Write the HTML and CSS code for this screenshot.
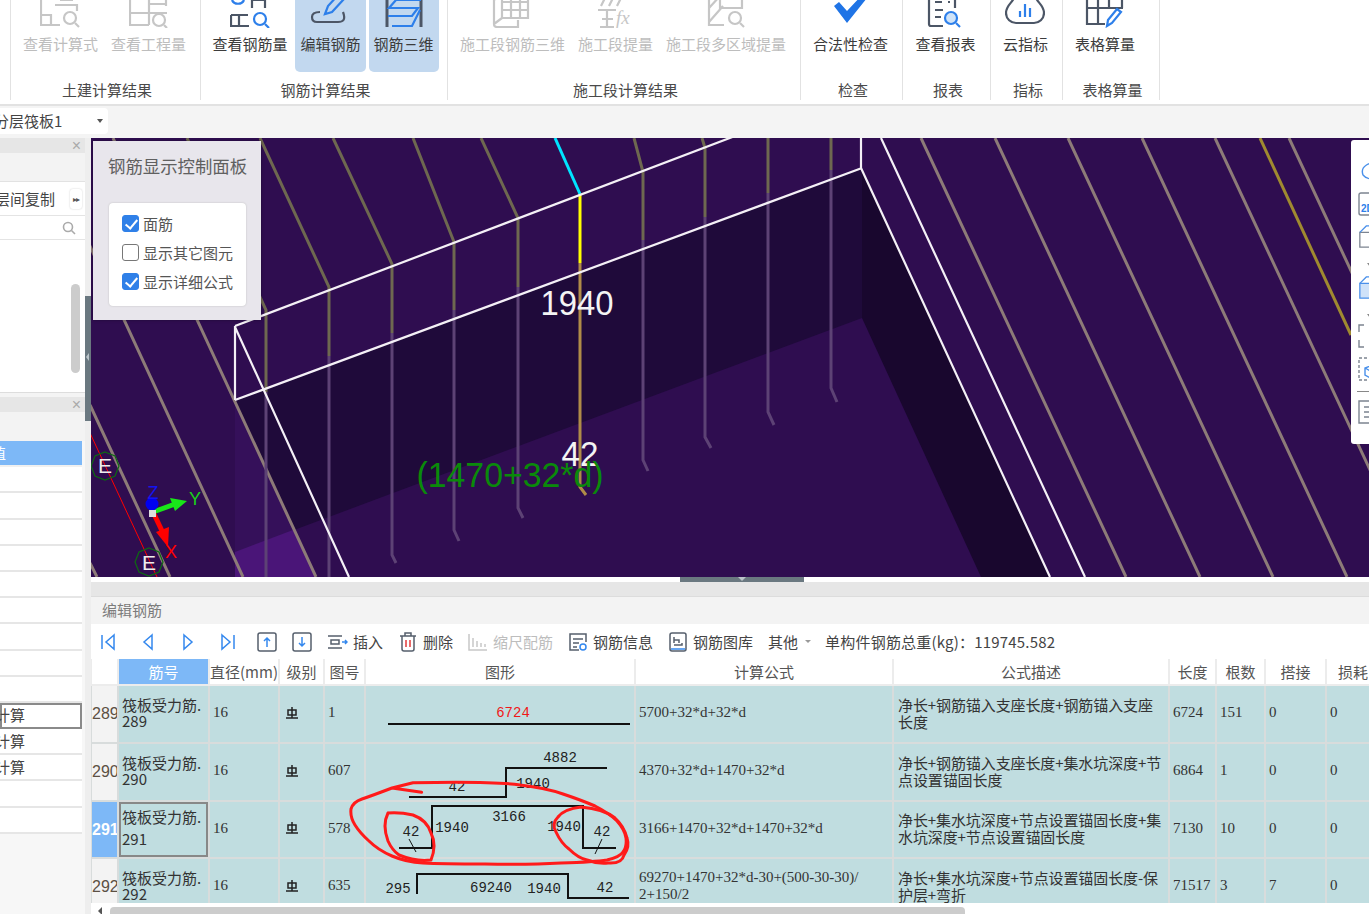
FILE: index.html
```html
<!DOCTYPE html>
<html lang="zh-CN">
<head>
<meta charset="utf-8">
<title>编辑钢筋</title>
<link rel="stylesheet" href="styles.css">
</head>
<body>

<!-- ribbon -->
<header class="ribbon">
  <div class="group g-edge"></div>

  <section class="group g-civil">
    <div class="btns">
      <div class="rbtn off">
        <svg class="ricon" viewBox="0 0 40 34"><path class="i-off" d="M1 0V31H20M1 21H11V31M15 11H37V17M20 6H33"/><circle class="i-off" cx="30" cy="24" r="6"/><path class="i-off" d="M35 29l4 4"/></svg>
        <span>查看计算式</span>
      </div>
      <div class="rbtn off">
        <svg class="ricon" viewBox="0 0 40 34"><path class="i-off" d="M1 0V31H20M1 19H38M20 0V31M37 0V12M20 10H37"/><circle class="i-off" cx="30" cy="26" r="6"/><path class="i-off" d="M35 31l3 3"/></svg>
        <span>查看工程量</span>
      </div>
    </div>
    <h3>土建计算结果</h3>
  </section>

  <section class="group g-rebar">
    <div class="btns">
      <div class="rbtn">
        <svg class="ricon" viewBox="0 0 40 34"><path class="i-blue" d="M2 6c2 5 10 5 12 0"/><path class="i-dark" d="M22 0V14M35 0V14M22 6H35M1 21H18M1 21V32H19M9 21V32"/><circle class="i-blue" cx="30" cy="25" r="6"/><path class="i-blue" d="M35 30l4 4"/></svg>
        <span>查看钢筋量</span>
      </div>
      <div class="rbtn on">
        <svg class="ricon" viewBox="0 0 40 34"><path class="i-dark" d="M33 18c3 8 0 10-5 10H7c-4 0-5-2-5-5 0-3 3-5 8-5"/><path class="i-blue" d="M15 20l3-8L29 0l5 5L22 18z"/></svg>
        <span>编辑钢筋</span>
      </div>
      <div class="rbtn on">
        <svg class="ricon" viewBox="0 0 40 34"><path class="i-dark thick" d="M3 0V33M37 0V33"/><path class="i-blue" d="M37 6H12L5 14H34L28 22H4M36 16L28 32H8"/></svg>
        <span>钢筋三维</span>
      </div>
    </div>
    <h3>钢筋计算结果</h3>
  </section>

  <section class="group g-stage">
    <div class="btns">
      <div class="rbtn off">
        <svg class="ricon" viewBox="0 0 40 34"><path class="i-off" d="M2 6V30Q2 33 5 33H26V26M2 30l8-6M10 0V24H36V4M10 8H36M10 16H36M19 0V24M28 0V24M2 6l8-6"/></svg>
        <span>施工段钢筋三维</span>
      </div>
      <div class="rbtn off">
        <svg class="ricon" viewBox="0 0 40 34"><path class="i-off" d="M3 16H21M12 16V33M5 33H19M7 25H18M6 12L11 2M14 12L20 0M22 12L28 0"/><text class="i-fx" x="21" y="30">fx</text></svg>
        <span>施工段提量</span>
      </div>
      <div class="rbtn off">
        <svg class="ricon" viewBox="0 0 40 34"><path class="i-off" d="M3 0V31H18M3 14L14 2M3 28L17 12M14 0V14H36V4"/><circle class="i-off" cx="29" cy="24" r="6"/><path class="i-off" d="M34 29l4 4"/></svg>
        <span>施工段多区域提量</span>
      </div>
    </div>
    <h3>施工段计算结果</h3>
  </section>

  <section class="group g-check">
    <div class="btns">
      <div class="rbtn">
        <svg class="ricon" viewBox="0 0 40 34"><path class="i-fill" d="M4 12l5-4 8 9L33 0l4 4-20 25z"/></svg>
        <span>合法性检查</span>
      </div>
    </div>
    <h3>检查</h3>
  </section>

  <section class="group g-report">
    <div class="btns">
      <div class="rbtn">
        <svg class="ricon" viewBox="0 0 40 34"><path class="i-dark" d="M4 0V30c0 2 1 2 2 2H18M30 0V14M10 8H17M23 8H25M10 16H18M10 23H16"/><circle class="i-blue light" cx="26" cy="24" r="6"/><path class="i-blue" d="M31 29l4 4"/></svg>
        <span>查看报表</span>
      </div>
    </div>
    <h3>报表</h3>
  </section>

  <section class="group g-cloud">
    <div class="btns">
      <div class="rbtn">
        <svg class="ricon" viewBox="0 0 40 34"><path class="i-dark" d="M10 0C10 8 1 10 1 19c0 6 5 10 10 10H29c5 0 10-4 10-10 0-9-9-11-9-19"/><path class="i-blue" d="M15 17V23M20 10V23M25 14V23"/></svg>
        <span>云指标</span>
      </div>
    </div>
    <h3>指标</h3>
  </section>

  <section class="group g-table">
    <div class="btns">
      <div class="rbtn">
        <svg class="ricon" viewBox="0 0 40 34"><path class="i-dark" d="M2 0V30H20M2 14H38M13 0V30M24 0V14M37 0V14M2 4H37"/><path class="i-blue" d="M22 32l1-6 9-11 4 3-9 11z"/></svg>
        <span>表格算量</span>
      </div>
    </div>
    <h3>表格算量</h3>
  </section>
</header>

<div class="floorbar">
  <div class="combo"><span class="combo-text">分层筏板1</span><i class="caret"></i></div>
</div>

<div class="workspace">
  <!-- left column, cut off by the window edge -->
  <aside class="side">
    <div class="side-panel top">
      <div class="side-head"><span class="close">×</span></div>
      <div class="side-blank"></div>
      <div class="side-tool"><span class="cut">层间复制</span><span class="more">▸▸</span></div>
      <div class="side-search">
        <svg class="search" viewBox="0 0 14 14"><circle cx="6" cy="6" r="4.5"/><path d="M9.5 9.5L13 13"/></svg>
      </div>
      <div class="side-tree"><div class="thumb"></div></div>
    </div>
    <div class="side-panel low">
      <div class="side-head"><span class="close">×</span></div>
      <div class="side-blank short"></div>
      <ul class="side-list">
        <li class="sel"><span class="cut-more">值</span></li>
        <li></li><li></li><li></li><li></li><li></li><li></li><li></li><li></li><li></li>
        <li class="cur"><span class="cut-less">计算</span></li>
        <li><span class="cut-less">计算</span></li>
        <li><span class="cut-less">计算</span></li>
        <li></li><li></li>
      </ul>
    </div>
  </aside>

  <div class="splitter"><div class="grip"><i></i></div></div>

  <main class="content">
    <div class="view">
      <svg class="scene" viewBox="91 138 1278 439">
        <rect class="s-bg" x="91" y="138" width="1278" height="439"/>
        <polygon class="s-wall" points="235,400 862,168 862,318 235,552"/>
        <polygon class="s-side" points="862,168 1050,577 981,577 862,318"/>
        <polygon class="s-left" points="235,400 316,577 235,577"/>
        <polygon class="s-glow" points="235,552 293,530 316,577 235,577"/>

        <!-- long bars on the right -->
        <path class="s-bar" d="M921 138L1126 577M995 138L1200 577M1068 138L1273 577M1142 138L1347 577M1215 138L1420 577M1289 138L1494 577"/>
        <path class="s-gold" d="M1260 138L1351 335"/>
        <!-- long bars on the left -->
        <path class="s-bar" d="M40 138L243 577M113 138L316 577M90 405L170 577M90 563L97 577"/>

        <!-- bent bars, top run -->
        <path class="s-olive" d="M187 138L266 310V392M260 138L329 287V356M333 138L392 264V333M413 138L454 242V310M481 138L518 218V287M634 138L643 172V240M702 138L705 148V217M768 138V193M831 138V170"/>
        <!-- bent bars, lower run -->
        <path class="s-faint" d="M266 392V577M329 356V577M392 333V555L396 563M454 310V530L459 541M518 287V508L523 518M643 240V460L648 471M705 217V437L711 448M768 193V412L774 425M831 170V388L837 402"/>

        <path class="s-cyan" d="M555 138L580 194"/>
        <path class="s-yellow" d="M580 194V263"/>
        <path class="s-tan" d="M580 263V487L586 495"/>

        <!-- slab outline -->
        <path class="s-white" d="M235 326L735 136M235 400L862 168M235 326V400M235 327L349 577M861 138V168M861 168L1050 577M881 138L1085 577"/>

        <path class="s-red" d="M90 433L157 577"/>
        <polygon class="s-ring" points="105,452 115,456 119,466 115,476 105,480 95,476 91,466 95,456"/>
        <polygon class="s-ring" points="149,548 159,552 163,562 159,572 149,576 139,572 135,562 139,552"/>
        <text class="s-e" x="105" y="473">E</text>
        <text class="s-e" x="149" y="570">E</text>

        <!-- axis gizmo -->
        <path class="a-y" d="M153 512L175 504"/>
        <polygon class="a-yh" points="187,501 170,498 175,511"/>
        <path class="a-x" d="M154 514L163 533"/>
        <polygon class="a-xh" points="168,547 156,532 169,527"/>
        <circle class="a-z" cx="152" cy="504" r="6.5"/>
        <rect class="a-o" x="149" y="510" width="7" height="7"/>
        <text class="a-tz" x="153" y="499">Z</text>
        <text class="a-ty" x="195" y="505">Y</text>
        <text class="a-tx" x="171" y="558">X</text>

        <text class="s-num" x="577" y="315" textLength="73" lengthAdjust="spacingAndGlyphs">1940</text>
        <text class="s-num" x="580" y="466" textLength="37" lengthAdjust="spacingAndGlyphs">42</text>
        <text class="s-formula" x="510" y="487" textLength="187" lengthAdjust="spacingAndGlyphs">(1470+32*d)</text>
      </svg>

      <div class="ctrl">
        <div class="ctrl-title">钢筋显示控制面板</div>
        <div class="ctrl-box">
          <label class="chk"><i class="box on"></i>面筋</label>
          <label class="chk"><i class="box"></i>显示其它图元</label>
          <label class="chk"><i class="box on"></i>显示详细公式</label>
        </div>
      </div>

      <div class="vtools">
        <svg class="vt" viewBox="0 0 24 24"><path class="v-blue" d="M5 16C2 8 10 2 24 4M5 16c3 4 10 5 19 4"/></svg>
        <svg class="vt" viewBox="0 0 24 24"><path class="v-gray" d="M24 1H3Q1 1 1 3V21Q1 23 3 23H24"/><text class="v-2d" x="3" y="20">2D</text></svg>
        <svg class="vt" viewBox="0 0 24 26"><path class="v-gray" d="M24 8H1V24H24"/><path class="v-blue" d="M1 8L8 1H24"/></svg>
        <i class="vcaret"></i>
        <svg class="vt" viewBox="0 0 24 26"><path class="v-fill" d="M24 8H1V24H24"/><path class="v-blue" d="M1 8L8 1H24"/></svg>
        <i class="vcaret"></i>
        <svg class="vt pull" viewBox="0 0 24 24"><path class="v-gray" d="M6 1H1V8M1 16V23H6"/></svg>
        <svg class="vt" viewBox="0 0 24 24"><path class="v-dash" d="M24 1H1V23H24"/><path class="v-blue" d="M24 5L7 11V18L14 22M7 11L18 17"/></svg>
        <i class="vsep"></i>
        <svg class="vt" viewBox="0 0 24 24"><path class="v-gray" d="M24 1H1V23H24M6 7H11M15 7H20M6 12H11M15 12H20M6 17H11M15 17H20"/></svg>
      </div>
    </div>

    <div class="view-foot"><div class="foot-tab"><i></i></div></div>
    <div class="edit-strip"></div>
    <div class="edit-title">编辑钢筋</div>

    <div class="tbar">
      <div class="navs">
        <svg class="ti" viewBox="0 0 20 20"><path class="t-blue" d="M4 3V17M16 3L8 10L16 17Z"/></svg>
        <svg class="ti" viewBox="0 0 20 20"><path class="t-blue" d="M14 3L6 10L14 17Z"/></svg>
        <svg class="ti" viewBox="0 0 20 20"><path class="t-blue" d="M6 3L14 10L6 17Z"/></svg>
        <svg class="ti" viewBox="0 0 20 20"><path class="t-blue" d="M16 3V17M4 3L12 10L4 17Z"/></svg>
      </div>
      <div class="moves">
        <svg class="ti" viewBox="0 0 20 20"><rect class="t-gray" x="1" y="1" width="18" height="18" rx="2"/><path class="t-blue" d="M10 15V6M7 9l3-3 3 3"/></svg>
        <svg class="ti" viewBox="0 0 20 20"><rect class="t-gray" x="1" y="1" width="18" height="18" rx="2"/><path class="t-blue" d="M10 5V14M7 11l3 3 3-3"/></svg>
      </div>
      <div class="tact">
        <svg class="ti" viewBox="0 0 20 20"><path class="t-gray" d="M0 4H14M0 16H14M3 8H11V12H3Z"/><path class="t-blue" d="M14 10H19M17 8l2 2-2 2"/></svg>
        <span>插入</span>
      </div>
      <div class="tact">
        <svg class="ti" viewBox="0 0 20 20"><path class="t-gray" d="M2 4H18M7 4V1H13V4M4 4V17Q4 19 6 19H14Q16 19 16 17V4"/><path class="t-red" d="M8 8V15M12 8V15"/></svg>
        <span>删除</span>
      </div>
      <div class="tact off">
        <svg class="ti" viewBox="0 0 20 20"><path class="t-off" d="M1 2V18H19M5 6V15M9 9V15M13 11V15M17 12V15"/></svg>
        <span>缩尺配筋</span>
      </div>
      <div class="tact">
        <svg class="ti" viewBox="0 0 20 20"><path class="t-gray" d="M11 18H2V2H18V10M5 7H15M5 11H11M5 15H9"/><circle class="t-blue" cx="15" cy="15" r="3"/></svg>
        <span>钢筋信息</span>
      </div>
      <div class="tact">
        <svg class="ti" viewBox="0 0 20 20"><rect class="t-gray" x="2" y="1" width="16" height="18" rx="2"/><path class="t-gray" d="M6 5V11M6 8H11V11M14 11V13H6"/><path class="t-blue" d="M3 17H17"/></svg>
        <span>钢筋图库</span>
      </div>
      <div class="tact">
        <span>其他</span><i class="tcaret"></i>
      </div>
      <div class="tsum">单构件钢筋总重(kg)：119745.582</div>
    </div>

    <div class="grid-wrap">
      <table class="grid">
        <colgroup>
          <col class="c-no"><col class="c-name"><col class="c-dia"><col class="c-lvl"><col class="c-fig">
          <col class="c-shape"><col class="c-calc"><col class="c-desc"><col class="c-len"><col class="c-cnt"><col class="c-lap"><col class="c-loss">
        </colgroup>
        <thead>
          <tr>
            <th></th><th class="sel">筋号</th><th>直径(mm)</th><th>级别</th><th>图号</th><th>图形</th>
            <th>计算公式</th><th>公式描述</th><th>长度</th><th>根数</th><th>搭接</th><th>损耗</th>
          </tr>
        </thead>
        <tbody>
          <tr>
            <td class="no">289</td>
            <td class="name">筏板受力筋.<br>289</td>
            <td class="m">16</td>
            <td class="lv"><svg class="grade" viewBox="0 0 14 14"><path d="M1 12H13M7 1V12M3 4H11V9H3Z"/></svg></td>
            <td class="m">1</td>
            <td class="shape"><svg viewBox="1 1 270 56"><text class="red" x="148" y="32">6724</text><path d="M23 39H265"/></svg></td>
            <td class="m">5700+32*d+32*d</td>
            <td class="desc">净长+钢筋锚入支座长度+钢筋锚入支座<br>长度</td>
            <td class="m">6724</td><td class="m">151</td><td class="m">0</td><td class="m">0</td>
          </tr>
          <tr>
            <td class="no">290</td>
            <td class="name">筏板受力筋.<br>290</td>
            <td class="m">16</td>
            <td class="lv"><svg class="grade" viewBox="0 0 14 14"><path d="M1 12H13M7 1V12M3 4H11V9H3Z"/></svg></td>
            <td class="m">607</td>
            <td class="shape"><svg viewBox="1 1 270 56"><text x="195" y="19">4882</text><text x="92" y="48">42</text><text x="168" y="45">1940</text><path d="M242 25H141V54H44"/></svg></td>
            <td class="m">4370+32*d+1470+32*d</td>
            <td class="desc">净长+钢筋锚入支座长度+集水坑深度+节<br>点设置锚固长度</td>
            <td class="m">6864</td><td class="m">1</td><td class="m">0</td><td class="m">0</td>
          </tr>
          <tr class="short">
            <td class="no cur">291</td>
            <td class="name edit">筏板受力筋.<br>291</td>
            <td class="m">16</td>
            <td class="lv"><svg class="grade" viewBox="0 0 14 14"><path d="M1 12H13M7 1V12M3 4H11V9H3Z"/></svg></td>
            <td class="m">578</td>
            <td class="shape"><svg viewBox="1 1 270 55"><text x="144" y="20">3166</text><text x="87" y="31">1940</text><text x="199" y="30">1940</text><text x="46" y="35">42</text><text x="237" y="35">42</text><path d="M34 47H67V5H218V47H251"/><path class="tick" d="M44 38L51 51M237 38L230 53"/></svg></td>
            <td class="m">3166+1470+32*d+1470+32*d</td>
            <td class="desc">净长+集水坑深度+节点设置锚固长度+集<br>水坑深度+节点设置锚固长度</td>
            <td class="m">7130</td><td class="m">10</td><td class="m">0</td><td class="m">0</td>
          </tr>
          <tr>
            <td class="no">292</td>
            <td class="name">筏板受力筋.<br>292</td>
            <td class="m">16</td>
            <td class="lv"><svg class="grade" viewBox="0 0 14 14"><path d="M1 12H13M7 1V12M3 4H11V9H3Z"/></svg></td>
            <td class="m">635</td>
            <td class="shape"><svg viewBox="1 1 270 56"><text x="33" y="35">295</text><text x="126" y="34">69240</text><text x="179" y="35">1940</text><text x="240" y="34">42</text><path d="M52 36V16H203V40H264"/></svg></td>
            <td class="m">69270+1470+32*d-30+(500-30-30)/<br>2+150/2</td>
            <td class="desc">净长+集水坑深度+节点设置锚固长度-保<br>护层+弯折</td>
            <td class="m">71517</td><td class="m">3</td><td class="m">7</td><td class="m">0</td>
          </tr>
        </tbody>
      </table>

      <!-- red marks drawn on top of the screenshot -->
      <svg class="scribble" viewBox="91 659 1278 244">
        <path d="M421.6 792.3L392 788L413 782.7Q493 781 520 785Q546 788 563 794Q581 800 595 806Q609 813 617 821Q625 830 626 838Q627 847 623 852Q620 857 607 860Q595 862 561 863Q528 865 485 864Q441 864 423 863Q406 862 392 856Q378 850 369 841Q360 833 355 825Q350 817 351 809Q353 802 362 799Q371 796 392 788"/>
        <path d="M388 813Q400 812 413 815Q427 820 431 833Q437 845 431 860Q416 862 399 855Q392 850 388 841Q382 825 388 813"/>
        <path d="M581 807Q564 809 558 817Q551 824 556 832Q561 843 569 849Q578 858 587 860Q597 864 608 863Q622 864 624 855Q630 847 627 838Q624 826 615 818Q604 809 581 807"/>
      </svg>
    </div>

    <div class="hscroll"><i class="h-left"></i><div class="h-thumb"></div></div>
  </main>
</div>

</body>
</html>
```

FILE: styles.css
```css
* { box-sizing: border-box; }

html, body {
  margin: 0;
  height: 100%;
}

body {
  width: 1369px;
  height: 914px;
  overflow: hidden;
  display: flex;
  flex-direction: column;
  background: #f4f4f4;
  font-family: "Noto Sans CJK SC", "Liberation Sans", sans-serif;
  font-size: 15px;
  color: #555;
}

/* ribbon */
.ribbon {
  display: flex;
  height: 106px;
  flex: none;
  background: #fff;
  border-bottom: 2px solid #e2e2e2;
  overflow: hidden;
}
.group {
  display: flex;
  flex-direction: column;
  align-items: center;
  height: 100px;
  border-right: 1px solid #e2e2e2;
  flex: none;
}
.g-edge { width: 11px; }
.g-civil { width: 190px; }
.g-rebar { width: 247px; }
.g-stage { width: 353px; }
.g-check { width: 102px; }
.g-report { width: 88px; }
.g-cloud { width: 72px; }
.g-table { width: 97px; }

.btns {
  display: flex;
  gap: 3px;
  justify-content: center;
  height: 72px;
  margin-left: -2px;
}
.g-table .btns { margin-left: 0; margin-right: 12px; }
.rbtn {
  display: flex;
  flex-direction: column;
  align-items: center;
  padding: 0 5px;
  height: 72px;
  color: #3c3c3c;
  border-radius: 0 0 5px 5px;
  white-space: nowrap;
  line-height: 22px;
}
.rbtn.on { background: #c2d8ef; }
.rbtn.off { color: #bdbdbd; }
.ricon {
  width: 40px;
  height: 34px;
  margin-top: -6px;
  margin-bottom: 5px;
  flex: none;
}
.group h3 {
  margin: 7px 0 0;
  padding-left: 3px;
  font-weight: 400;
  font-size: 15px;
  line-height: 22px;
  color: #4a4a4a;
}

.ricon path, .ricon circle { fill: none; stroke-width: 2.2; }
.i-off { stroke: #c6c6c6; }
.i-dark { stroke: #4c5666; }
.i-blue { stroke: #2d7fea; }
.i-blue.light { fill: #cfe3f8 !important; }
.ricon .thick { stroke-width: 3; }
.ricon .i-fill { fill: #1f74e6; stroke: none; }
.i-fx {
  fill: #c6c6c6;
  font-family: "Liberation Serif", serif;
  font-style: italic;
  font-size: 19px;
}

/* floor selector */
.floorbar {
  height: 32px;
  flex: none;
  padding-top: 2px;
}
.combo {
  width: 108px;
  height: 26px;
  background: #fff;
  border-radius: 0 4px 4px 0;
  display: flex;
  align-items: center;
  overflow: hidden;
  position: relative;
}
.combo-text {
  margin-left: -6px;
  margin-top: -2px;
  color: #444;
  white-space: nowrap;
}
.caret {
  margin-left: auto;
  margin-right: 5px;
  border-top: 4px solid #555;
  border-left: 3px solid transparent;
  border-right: 3px solid transparent;
}

.workspace {
  display: flex;
  flex: 1;
  min-height: 0;
}

/* left column */
.side {
  width: 85px;
  flex: none;
  display: flex;
  flex-direction: column;
  gap: 4px;
  overflow: hidden;
}
.side-panel { position: relative; }
.side-panel.top { height: 255px; border-bottom: 1px solid #ddd; }
.side-head {
  height: 15px;
  background: #e6e6e6;
  text-align: right;
  padding-right: 4px;
}
.close {
  display: block;
  font-family: "Liberation Sans", sans-serif;
  font-size: 16px;
  line-height: 16px;
  color: #aaa;
}
.side-blank { height: 29px; background: #f3f3f3; border-bottom: 1px solid #e2e2e2; }
.side-blank.short { border: 0; }
.side-tool {
  height: 34px;
  background: #fff;
  display: flex;
  align-items: center;
  overflow: hidden;
  border-bottom: 1px solid #e4e4e4;
}
.cut { margin-left: -5px; white-space: nowrap; color: #444; }
.more {
  margin-left: auto;
  margin-right: 3px;
  width: 12px;
  height: 20px;
  font-size: 8px;
  line-height: 20px;
  text-align: center;
  color: #555;
  border-radius: 3px;
  background: #fff;
  box-shadow: 0 0 2px #ccc;
  letter-spacing: -1px;
}
.side-search {
  height: 24px;
  background: #fff;
  display: flex;
  align-items: center;
  justify-content: flex-end;
  padding-right: 9px;
  border-bottom: 1px solid #e4e4e4;
}
.search { width: 14px; height: 14px; }
.search circle, .search path { fill: none; stroke: #aaa; stroke-width: 1.6; }
.side-tree { height: 152px; background: #fff; position: relative; }
.thumb {
  position: absolute;
  left: 71px;
  top: 44px;
  width: 9px;
  height: 89px;
  border-radius: 5px;
  background: #ccc;
}
.side-panel.low { flex: 1; background: #f7f7f7; }
.side-list {
  list-style: none;
  margin: 0;
  padding: 0;
  width: 82px;
  overflow: hidden;
}
.side-list li {
  height: 26.2px;
  background: #fff;
  border-bottom: 2px solid #e6e6e6;
  line-height: 24px;
  color: #444;
  white-space: nowrap;
}
.side-list li.sel { background: #7db8f7; color: #fff; border-color: #f0f0f0; }
.side-list li.cur { box-shadow: inset 0 0 0 2px #8a8a8a; border: 0; }
.cut-more { margin-left: -9px; }
.cut-less { margin-left: -5px; }

.splitter {
  width: 6px;
  flex: none;
  background: #eee;
  padding-top: 158px;
}
.grip {
  height: 125px;
  background: #6a7880;
  position: relative;
}
.grip i {
  position: absolute;
  left: 1px;
  top: 57px;
  border-right: 3px solid #bcc5ca;
  border-top: 4px solid transparent;
  border-bottom: 4px solid transparent;
}

.content {
  flex: 1;
  min-width: 0;
  display: flex;
  flex-direction: column;
  background: #fff;
}

/* 3D view */
.view {
  height: 439px;
  flex: none;
  position: relative;
  overflow: hidden;
}
.scene { display: block; width: 100%; height: 100%; }
.scene path { fill: none; }
.s-bg { fill: #2f0d50; }
.s-wall { fill: #1f0a3a; }
.s-side { fill: #19072e; }
.s-left { fill: #35105a; }
.s-glow { fill: #4a1578; }
.s-bar { stroke: #8d7b78; stroke-width: 3; }
.s-gold { stroke: #a08a30; stroke-width: 3; }
.s-olive { stroke: #6e6850; stroke-width: 3; }
.s-faint { stroke: #5d4275; stroke-width: 3; }
.s-cyan { stroke: #00e5ff; stroke-width: 3; }
.s-yellow { stroke: #ffff00; stroke-width: 3; }
.s-tan { stroke: #b08c48; stroke-width: 3; }
.s-white { stroke: #f4f0f6; stroke-width: 2.2; }
.s-red { stroke: #f00; stroke-width: 1; }
.s-ring { fill: none; stroke: #0d6a12; stroke-width: 1.2; }
.s-e {
  fill: #eee;
  font-family: "Liberation Sans", sans-serif;
  font-size: 21px;
  text-anchor: middle;
}
.a-y { stroke: #19e619; stroke-width: 5; }
.a-yh { fill: #19e619; }
.a-x { stroke: #f00; stroke-width: 5; }
.a-xh { fill: #f00; }
.a-z { fill: #0000f0; }
.a-o { fill: #ddd; }
.a-tz, .a-ty, .a-tx {
  font-family: "Liberation Sans", sans-serif;
  font-size: 18px;
  text-anchor: middle;
}
.a-tz { fill: #1414f0; }
.a-ty { fill: #19d419; }
.a-tx { fill: #f00; }
.s-num {
  fill: #f4f4f4;
  font-family: "Liberation Sans", sans-serif;
  font-size: 35px;
  text-anchor: middle;
}
.s-formula {
  fill: #0a8a0a;
  font-family: "Liberation Sans", sans-serif;
  font-size: 35px;
  text-anchor: middle;
}

.ctrl {
  position: absolute;
  left: 2px;
  top: 3px;
  width: 168px;
  height: 179px;
  padding: 14px 15px 0 16px;
  background: #e8e6ec;
  box-shadow: 0 0 3px rgba(0, 0, 0, .35);
}
.ctrl-title {
  font-size: 17.4px;
  line-height: 22px;
  color: #606060;
  white-space: nowrap;
  margin-left: -1px;
}
.ctrl-box {
  margin-top: 26px;
  height: 103px;
  padding: 9px 0 0 13px;
  background: #fff;
  border-radius: 4px;
  box-shadow: 0 0 2px #bbb;
  display: flex;
  flex-direction: column;
  gap: 7px;
}
.chk {
  display: flex;
  align-items: center;
  gap: 4px;
  height: 22px;
  color: #555;
  white-space: nowrap;
}
.box {
  width: 17px;
  height: 17px;
  flex: none;
  border: 1px solid #777;
  border-radius: 3px;
  background: #fff;
  position: relative;
}
.box.on { background: #2f80e8; border-color: #2f80e8; }
.box.on::after {
  content: "";
  position: absolute;
  left: 5px;
  top: 1px;
  width: 5px;
  height: 10px;
  border: solid #fff;
  border-width: 0 2px 2px 0;
  transform: rotate(40deg);
}

.vtools {
  position: absolute;
  left: 1260px;
  top: 2px;
  width: 30px;
  height: 304px;
  background: #fff;
  border-radius: 3px 0 0 3px;
  padding: 19px 0 0 7px;
  display: flex;
  flex-direction: column;
  overflow: hidden;
}
.vt { width: 24px; height: 24px; flex: none; margin-bottom: 9px; }
.vt.pull { margin-top: -3px; }
.vt path { fill: none; stroke-width: 1.4; }
.v-gray { stroke: #7c8490; }
.v-blue { stroke: #4a90ea; }
.vt .v-fill { fill: #cfe2f9; stroke: #4a90ea; }
.v-dash { stroke: #7c8490; stroke-dasharray: 3 2; }
.v-2d { fill: #2d7fea; font-size: 10px; font-family: "Liberation Sans", sans-serif; font-weight: 700; }
.vcaret {
  display: block;
  width: 0;
  flex: none;
  margin: 5px 0 9px 9px;
  border-top: 4px solid #888;
  border-left: 3px solid transparent;
  border-right: 3px solid transparent;
}
.vsep { display: block; flex: none; height: 1px; background: #888; margin: 1px 0 8px -1px; }

.view-foot {
  height: 5px;
  flex: none;
  background: #fff;
  padding-left: 589px;
}
.foot-tab {
  width: 124px;
  height: 5px;
  background: #6a7880;
  position: relative;
}
.foot-tab i {
  position: absolute;
  left: 58px;
  top: 0;
  border-top: 4px solid #bcc5ca;
  border-left: 4px solid transparent;
  border-right: 4px solid transparent;
}
.edit-strip { height: 15px; flex: none; background: #e6e6e6; border-bottom: 1px solid #dcdcdc; }
.edit-title {
  height: 27px;
  flex: none;
  background: #f3f3f3;
  padding-left: 11px;
  line-height: 26px;
  color: #7c7c7c;
}

/* toolbar above the table */
.tbar {
  height: 35px;
  flex: none;
  display: flex;
  align-items: center;
  padding-left: 7px;
  background: #fff;
  white-space: nowrap;
  color: #444;
}
.navs { display: flex; gap: 20px; }
.moves { display: flex; gap: 15px; margin-left: 19px; margin-right: 16px; }
.ti { width: 20px; height: 20px; flex: none; }
.ti path, .ti rect, .ti circle { fill: none; stroke-width: 1.5; }
.t-blue { stroke: #3488ee; }
.t-gray { stroke: #555f6c; }
.t-red { stroke: #e23b3b; }
.t-off { stroke: #c8c8c8; }
.tact {
  display: flex;
  align-items: center;
  gap: 5px;
  margin-right: 15px;
}
.tact.off { color: #bdbdbd; }
.tcaret {
  margin-left: 2px;
  margin-right: 0;
  border-top: 3px solid #999;
  border-left: 3px solid transparent;
  border-right: 3px solid transparent;
}
.tsum { margin-left: -1px; letter-spacing: .2px; }

/* rebar table */
.grid-wrap {
  height: 244px;
  flex: none;
  overflow: hidden;
  position: relative;
}
.grid {
  table-layout: fixed;
  width: 1289px;
  margin-left: -1px;
  border-collapse: collapse;
}
.c-no { width: 27px; }
.c-name { width: 91px; }
.c-dia { width: 70px; }
.c-lvl { width: 45px; }
.c-fig { width: 41px; }
.c-shape { width: 270px; }
.c-calc { width: 258px; }
.c-desc { width: 276px; }
.c-len { width: 47px; }
.c-cnt { width: 49px; }
.c-lap { width: 61px; }
.c-loss { width: 54px; }

.grid th {
  height: 26px;
  padding: 0;
  font-weight: 400;
  color: #555;
  background: #fff;
  border: 2px solid #ececec;
  border-top: 0;
  white-space: nowrap;
  overflow: hidden;
}
.grid th.sel { background: #7db8f7; color: #fff; }
.grid td {
  padding: 0 3px 3px;
  background: #c0dde0;
  border: 2px solid #d8dcdc;
  color: #333;
  line-height: 16px;
  overflow: hidden;
  white-space: nowrap;
}
.grid td.no {
  padding: 0;
  background: #f3f3f3;
  color: #5c5044;
  text-align: center;
  font-family: "Liberation Sans", sans-serif;
  font-size: 16px;
}
.grid td.no.cur { background: #7db8f7; color: #fff; font-weight: 700; }
.grid td.name { color: #333; line-height: 16px; font-size: 15px; }
.grid td.name.edit {
  line-height: 22px;
  box-shadow: inset 0 0 0 2px #888;
}
.grid td.m {
  font-family: "Liberation Serif", serif;
  font-size: 15px;
  line-height: 17px;
}
.grid td.desc { line-height: 17px; padding-left: 4px; letter-spacing: -.1px; }
.grid td.lv { padding-left: 5px; }
.grade { width: 14px; height: 14px; display: block; }
.grade path { fill: none; stroke: #222; stroke-width: 1.5; }
.grid td.shape { padding: 0; overflow: visible; }
.shape svg {
  display: block;
  width: 270px;
  height: 56px;
  overflow: visible;
}
.short .shape svg { height: 55px; }
.shape text {
  font-family: "Liberation Mono", monospace;
  font-size: 14px;
  fill: #222;
  text-anchor: middle;
}
.shape text.red { fill: #f01818; }
.shape path { fill: none; stroke: #111; stroke-width: 2; }
.shape path.tick { stroke-width: 1; }

.scribble {
  position: absolute;
  left: 0;
  top: 0;
  width: 1278px;
  height: 244px;
  pointer-events: none;
}
.scribble path {
  fill: none;
  stroke: #ff1a1a;
  stroke-width: 3;
  stroke-linecap: round;
  stroke-linejoin: round;
}

.hscroll {
  height: 11px;
  flex: none;
  background: #fff;
  padding: 4px 0 0 19px;
  position: relative;
}
.h-left {
  position: absolute;
  left: 7px;
  top: 4px;
  border-right: 4px solid #555;
  border-top: 4px solid transparent;
  border-bottom: 4px solid transparent;
}
.h-thumb {
  width: 855px;
  height: 7px;
  background: #ccc;
  border-radius: 4px 4px 0 0;
}
```
